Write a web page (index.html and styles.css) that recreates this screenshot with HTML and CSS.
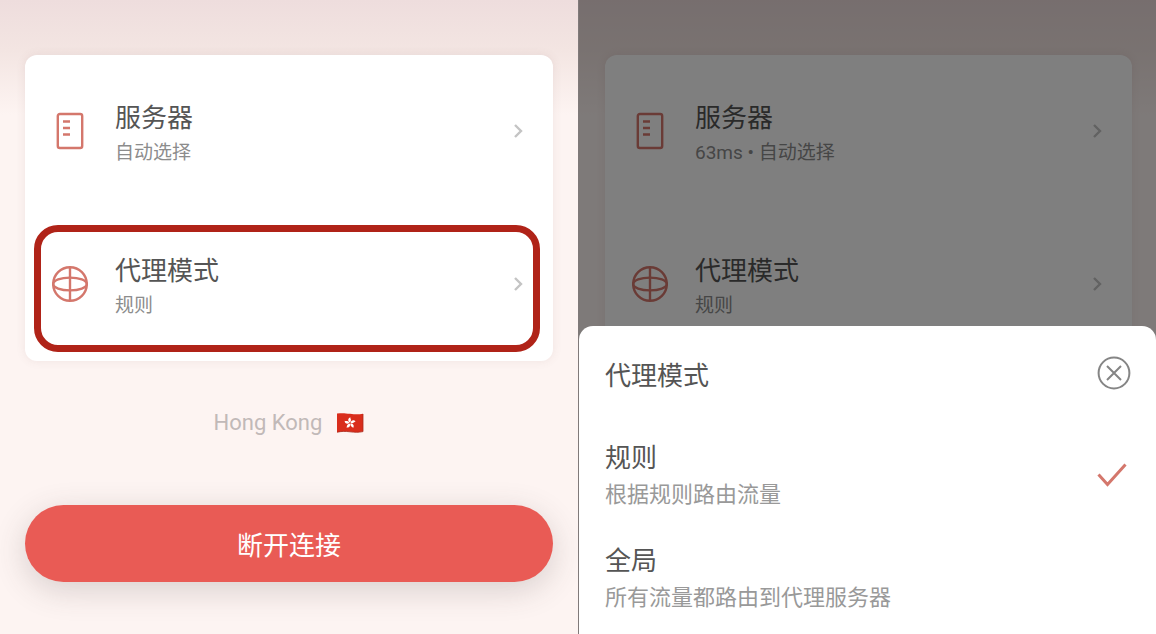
FILE: index.html
```html
<!DOCTYPE html>
<html lang="zh-CN">

<head>
    <meta charset="UTF-8"/>
    <meta name="viewport" content="width=device-width, initial-scale=1.0"/>
    <title>代理模式</title>
    <link rel="stylesheet" href="styles.css">
</head>

<body>
<svg class="sprite" width="0" height="0" aria-hidden="true">
    <symbol id="icon-server" viewBox="0 0 40 40">
        <rect x="7.8" y="3" width="24.4" height="34" rx="2"/>
        <path d="M13 10.5h7M13 17h7M13 23.5h7"/>
    </symbol>
    <symbol id="icon-globe" viewBox="0 0 40 40">
        <circle cx="20" cy="20" r="16.8"/>
        <path d="M20 3.2v33.6"/>
        <ellipse cx="20" cy="20" rx="16.8" ry="6.4"/>
    </symbol>
    <symbol id="icon-arrow" viewBox="0 0 10 14">
        <path d="M2 1l6 6-6 6"/>
    </symbol>
</svg>

<main class="screens">
    <section class="phone">
        <div class="card">
            <button type="button" class="row">
                <svg class="row-icon"><use href="#icon-server"/></svg>
                <span class="row-text">
                    <span class="title">服务器</span>
                    <span class="sub">自动选择</span>
                </span>
                <svg class="arrow"><use href="#icon-arrow"/></svg>
            </button>
            <button type="button" class="row marked">
                <svg class="row-icon"><use href="#icon-globe"/></svg>
                <span class="row-text">
                    <span class="title">代理模式</span>
                    <span class="sub">规则</span>
                </span>
                <svg class="arrow"><use href="#icon-arrow"/></svg>
            </button>
        </div>
        <div class="location">
            <span>Hong Kong</span>
            <svg class="flag" viewBox="0 0 28 20">
                <path fill="#d92d1c" d="M1 .6C6-.2 9 .2 14 .8s8 .8 13 0V18.600c-5 1-8 .8-13 .2s-8-.6-13 .4z"/>
                <path fill="none" stroke="#a92a1c" stroke-width=".8" d="M1 19.200c5-1 8-1 13-.4s8 .8 13-.2V1"/>
                <g fill="#fff" transform="translate(14 10)">
                    <path id="petal" d="M0-.6C-2.600-1.800-2.200-4.900.4-5.800c-.5 1.200 1.800 2.400-.4 5.200z"/>
                    <use href="#petal" transform="rotate(72)"/>
                    <use href="#petal" transform="rotate(144)"/>
                    <use href="#petal" transform="rotate(216)"/>
                    <use href="#petal" transform="rotate(288)"/>
                </g>
            </svg>
        </div>
        <button type="button" class="disconnect">断开连接</button>
    </section>

    <section class="phone dimmed">
        <div class="card">
            <button type="button" class="row">
                <svg class="row-icon"><use href="#icon-server"/></svg>
                <span class="row-text">
                    <span class="title">服务器</span>
                    <span class="sub">63ms • 自动选择</span>
                </span>
                <svg class="arrow"><use href="#icon-arrow"/></svg>
            </button>
            <button type="button" class="row">
                <svg class="row-icon"><use href="#icon-globe"/></svg>
                <span class="row-text">
                    <span class="title">代理模式</span>
                    <span class="sub">规则</span>
                </span>
                <svg class="arrow"><use href="#icon-arrow"/></svg>
            </button>
        </div>
        <div class="backdrop"></div>
        <form class="sheet">
            <div class="sheet-header">
                <h2 class="title">代理模式</h2>
                <button type="button" class="close" aria-label="关闭">
                    <svg viewBox="0 0 34 34" width="34" height="34">
                        <circle cx="17" cy="17" r="15.400"/>
                        <path d="M10 10l14 14M24 10L10 24"/>
                    </svg>
                </button>
            </div>
            <label class="option">
                <input type="radio" name="mode" checked>
                <span class="option-text">
                    <span class="title">规则</span>
                    <span class="sub">根据规则路由流量</span>
                </span>
                <svg class="check" viewBox="0 0 30 24"><path d="M1.500 11.500L10.500 21.500 28.500 1.500"/></svg>
            </label>
            <label class="option">
                <input type="radio" name="mode">
                <span class="option-text">
                    <span class="title">全局</span>
                    <span class="sub">所有流量都路由到代理服务器</span>
                </span>
                <svg class="check" viewBox="0 0 30 24"><path d="M1.500 11.500L10.500 21.500 28.500 1.500"/></svg>
            </label>
        </form>
    </section>
</main>
</body>

</html>
```
FILE: styles.css
```css
* {
    box-sizing: border-box;
}

body {
    margin: 0;
    font-family: Roboto, "Noto Sans CJK SC", sans-serif;
    color: #555;
}

button {
    font-family: inherit;
    color: inherit;
    border: none;
    background: none;
    padding: 0;
    cursor: pointer;
}

.sprite {
    position: absolute;
}

.screens {
    display: grid;
    grid-template-columns: 1fr 1fr;
    min-height: 100vh;
}

.phone {
    position: relative;
    overflow: hidden;
    padding: 55px 25px 52px;
    background: linear-gradient(#eedddd, #f3e5e2 50px, #fdf4f2 115px);
}

.dimmed {
    border-left: 1px solid #807a7a;
    padding-left: 26px;
    padding-right: 24px;
}

/* settings card */
.card {
    border-radius: 12px;
    background: #fff;
    box-shadow: 0 0 10px rgba(120, 80, 80, 0.1);
}

.row {
    position: relative;
    display: flex;
    align-items: center;
    width: 100%;
    height: 153px;
    padding: 0 30px 2px 25px;
    text-align: left;
}

.row-icon {
    width: 40px;
    height: 40px;
    margin-right: 25px;
    fill: none;
    stroke: #d4776c;
    stroke-width: 2.4;
}

.row-text,
.option-text {
    display: flex;
    flex: 1;
    flex-direction: column;
}

.row-text {
    padding-top: 4px;
}

.title {
    margin: 0;
    font-size: 26px;
    font-weight: 400;
    line-height: 40px;
}

.sub {
    font-size: 19px;
    line-height: 30px;
    color: #8c8c8c;
}

.arrow {
    width: 10px;
    height: 14px;
    fill: none;
    stroke: #c4c4c4;
    stroke-width: 2.4;
}

/* red frame over the row */
.marked::after {
    content: "";
    position: absolute;
    inset: 17px 13px 9px 9px;
    border: 7px solid #b02318;
    border-radius: 24px;
}

.location {
    display: flex;
    justify-content: center;
    align-items: center;
    gap: 14px;
    margin: 46px 0 66px;
    font-size: 22px;
    line-height: 32px;
    color: #c1b9b8;
}

.flag {
    width: 28px;
    height: 20px;
}

.disconnect {
    width: 100%;
    height: 77px;
    border-radius: 39px;
    background: #e95b55;
    box-shadow: 0 8px 32px rgba(70, 60, 60, 0.2);
    color: #fff;
    font-size: 26px;
}

/* bottom sheet */
.backdrop {
    position: absolute;
    inset: 0;
    background: rgba(0, 0, 0, 0.5);
}

.sheet {
    position: absolute;
    left: 0;
    right: 0;
    bottom: 0;
    padding: 30px 25px 20px 26px;
    border-radius: 14px 14px 0 0;
    background: #fff;
}

.sheet-header {
    display: flex;
    justify-content: space-between;
    align-items: flex-start;
    margin-bottom: 42px;
}

.close {
    height: 34px;
}

.close svg {
    display: block;
    fill: none;
    stroke: #858585;
    stroke-width: 2;
}

.option {
    position: relative;
    display: flex;
    align-items: center;
    cursor: pointer;
}

.option + .option {
    margin-top: 30px;
}

.option input {
    position: absolute;
    opacity: 0;
}

.option .sub {
    font-size: 22px;
    line-height: 33px;
    color: #999;
}

.check {
    width: 30px;
    height: 24px;
    margin-right: 4px;
    fill: none;
    stroke: #d4776c;
    stroke-width: 3;
    visibility: hidden;
}

.option input:checked ~ .check {
    visibility: visible;
}
```
